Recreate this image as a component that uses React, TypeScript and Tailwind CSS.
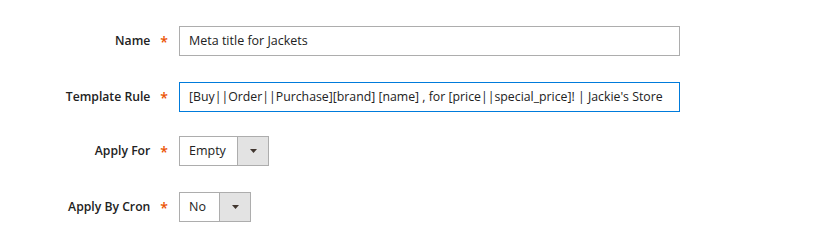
import React from "react";

type SelectProps = {
  value: string;
  textWidth: string;
};

const Label: React.FC<{ text: string }> = ({ text }) => (
  <div className="flex w-[179px] shrink-0 items-center justify-end pr-[11px]">
    <span className="text-[12.2px] font-semibold text-[#222]">{text}</span>
    <span className="ml-[10px] text-[14px] font-semibold text-[#eb5202]">*</span>
  </div>
);

const SelectBox: React.FC<SelectProps> = ({ value, textWidth }) => (
  <div className="flex h-[30px] border border-[#adadad] bg-white">
    <div className={`flex items-center pl-[9px] text-[12.5px] text-[#222] ${textWidth}`}>
      {value}
    </div>
    <div className="flex w-[31px] items-center justify-center border-l border-[#adadad] bg-[#e3e3e3]">
      <svg width="7" height="4" viewBox="0 0 7 4">
        <path d="M0 0 L7 0 L3.5 4 Z" fill="#41362f" />
      </svg>
    </div>
  </div>
);

const App: React.FC = () => {
  return (
    <div
      className="h-[238px] w-[823px] bg-white pt-[26px]"
      style={{ fontFamily: '"Open Sans", sans-serif' }}
    >
      {/* name */}
      <div className="flex h-[30px]">
        <Label text="Name" />
        <div className="flex h-[30px] w-[501px] items-center border border-[#adadad] pl-[9px] text-[12.5px] text-[#222]">
          Meta title for Jackets
        </div>
      </div>

      {/* template rule */}
      <div className="mt-[26px] flex h-[30px]">
        <Label text="Template Rule" />
        <div className="flex h-[30px] w-[501px] items-center border border-[#007bdb] pl-[9px] text-[12.3px] whitespace-nowrap text-[#222]">
          [Buy||Order||Purchase][brand] [name] , for [price||special_price]! | Jackie's Store
        </div>
      </div>

      {/* apply for */}
      <div className="mt-[24px] flex h-[30px]">
        <Label text="Apply For" />
        <SelectBox value="Empty" textWidth="w-[57px]" />
      </div>

      {/* apply by cron */}
      <div className="mt-[26px] flex h-[30px]">
        <Label text="Apply By Cron" />
        <SelectBox value="No" textWidth="w-[39px]" />
      </div>
    </div>
  );
};

export default App;
